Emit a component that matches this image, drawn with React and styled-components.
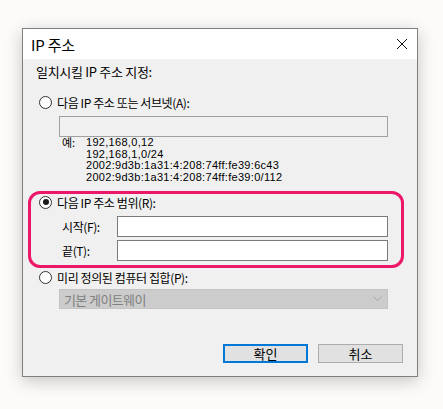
import React from 'react';
import styled, { createGlobalStyle } from 'styled-components';

const GlobalStyle = createGlobalStyle`
  html, body {
    margin: 0;
    padding: 0;
    background: #fdfbfa;
  }
  body {
    font-family: "Noto Sans CJK KR", "Liberation Sans", sans-serif;
    color: #000;
  }
`;

const Page = styled.div`
  width: 443px;
  height: 409px;
  padding: 28px 0 0 22px;
  box-sizing: border-box;
`;

const Dialog = styled.div`
  width: 396px;
  height: 349px;
  box-sizing: border-box;
  border: 1px solid #7f7f7f;
  background: #f0f0f0;
  box-shadow: 0 4px 16px rgba(0, 0, 0, 0.22);
  display: flex;
  flex-direction: column;
`;

const TitleBar = styled.div`
  height: 30px;
  background: #fff;
  display: flex;
  align-items: center;
  justify-content: space-between;
  padding: 0 9px 0 8px;
  font-size: 15px;
  letter-spacing: -0.2px;
`;

const CloseIcon = () => (
  <svg width="12" height="12" viewBox="0 0 12 12">
    <path d="M1 1 L11 11 M11 1 L1 11" stroke="#111" strokeWidth="1" fill="none" />
  </svg>
);

const Body = styled.div`
  flex: 1;
  padding: 5px 14px 0 13px;
  display: flex;
  flex-direction: column;
`;

const Heading = styled.div`
  font-size: 13px;
  line-height: 16px;
  letter-spacing: -0.3px;
  height: 16px;
`;

const RadioRow = styled.label`
  display: flex;
  align-items: center;
  height: 16px;
  margin-top: ${(p) => p.$top || 0}px;
  margin-left: 3px;
  font-size: 12px;
  letter-spacing: -0.4px;
`;

const RadioCircle = styled.span`
  width: 13px;
  height: 13px;
  box-sizing: border-box;
  border: 1px solid #333;
  border-radius: 50%;
  background: #fff;
  display: flex;
  align-items: center;
  justify-content: center;
  margin-right: 5px;
  flex-shrink: 0;

  &::after {
    content: '';
    width: 6px;
    height: 6px;
    border-radius: 50%;
    background: ${(p) => (p.$checked ? '#1a1a1a' : 'transparent')};
  }
`;

const Field = styled.div`
  height: 21px;
  box-sizing: border-box;
  border: 1px solid ${(p) => p.$border || '#7a7a7a'};
  background: ${(p) => p.$bg || '#fff'};
  flex: ${(p) => (p.$grow ? 1 : 'none')};
`;

const Indented = styled.div`
  margin: ${(p) => p.$top || 0}px 15px 0 23px;
`;

const Examples = styled.div`
  display: grid;
  grid-template-columns: 24px auto;
  margin-left: 26px;
  font-family: "Liberation Sans", "Noto Sans CJK KR", sans-serif;
  font-size: 11px;
  line-height: 11.5px;
  letter-spacing: 0.3px;
`;

const ExLabel = styled.span`
  font-family: "Noto Sans CJK KR", sans-serif;
  font-size: 11px;
  letter-spacing: 0;
`;

const Group = styled.div`
  position: relative;
  display: flex;
  flex-direction: column;
  margin-top: 11px;

  &::after {
    content: '';
    position: absolute;
    top: -3px;
    bottom: -7px;
    left: -8px;
    right: -1px;
    border: 3px solid #ec1768;
    border-radius: 12px;
    pointer-events: none;
  }
`;

const RangeRow = styled.div`
  display: flex;
  align-items: center;
  margin-left: 26px;
  margin-right: 15px;
  margin-top: ${(p) => p.$top}px;
  font-size: 12px;
  letter-spacing: -0.4px;
`;

const RangeLabel = styled.span`
  width: 55px;
  flex-shrink: 0;
`;

const Combo = styled.div`
  margin: 4px 15px 0 23px;
  height: 20px;
  box-sizing: border-box;
  border: 1px solid #c4c4c4;
  background: #cccccc;
  display: flex;
  align-items: center;
  justify-content: space-between;
  padding: 0 5px 0 4px;
  color: #808080;
  font-size: 13px;
  letter-spacing: -0.6px;
`;

const Chevron = () => (
  <svg width="9" height="6" viewBox="0 0 9 6">
    <path d="M0.5 0.5 L4.5 4.5 L8.5 0.5" stroke="#a8a8a8" strokeWidth="1" fill="none" />
  </svg>
);

const ButtonBar = styled.div`
  display: flex;
  justify-content: flex-end;
  gap: 10px;
  margin-top: 35px;
`;

const Button = styled.button`
  width: 85px;
  height: 19px;
  box-sizing: border-box;
  padding: 0;
  background: #e1e1e1;
  border: ${(p) => (p.$default ? '2px solid #0078d7' : '1px solid #adadad')};
  font-family: "Noto Sans CJK KR", sans-serif;
  font-size: 13px;
  line-height: 1;
  color: #000;
  display: flex;
  align-items: center;
  justify-content: center;
`;

const App = () => (
  <Page>
    <GlobalStyle />
    <Dialog>
      <TitleBar>
        <span>IP 주소</span>
        <CloseIcon />
      </TitleBar>
      <Body>
        <Heading>일치시킬 IP 주소 지정:</Heading>

        <RadioRow $top={14}>
          <RadioCircle />
          다음 IP 주소 또는 서브넷(A):
        </RadioRow>
        <Indented $top={6}>
          <Field $bg="#f0f0f0" $border="#a0a0a0" />
        </Indented>
        <Examples>
          <ExLabel>예:</ExLabel>
          <span>192,168,0,12</span>
          <span />
          <span>192,168,1,0/24</span>
          <span />
          <span>2002:9d3b:1a31:4:208:74ff:fe39:6c43</span>
          <span />
          <span>2002:9d3b:1a31:4:208:74ff:fe39:0/112</span>
        </Examples>

        <Group>
          <RadioRow>
            <RadioCircle $checked />
            다음 IP 주소 범위(R):
          </RadioRow>
          <RangeRow $top={6}>
            <RangeLabel>시작(F):</RangeLabel>
            <Field $grow />
          </RangeRow>
          <RangeRow $top={3}>
            <RangeLabel>끝(T):</RangeLabel>
            <Field $grow />
          </RangeRow>
        </Group>

        <RadioRow $top={8}>
          <RadioCircle />
          미리 정의된 컴퓨터 집합(P):
        </RadioRow>
        <Combo>
          <span>기본 게이트웨이</span>
          <Chevron />
        </Combo>

        <ButtonBar>
          <Button $default>확인</Button>
          <Button>취소</Button>
        </ButtonBar>
      </Body>
    </Dialog>
  </Page>
);

export default App;
